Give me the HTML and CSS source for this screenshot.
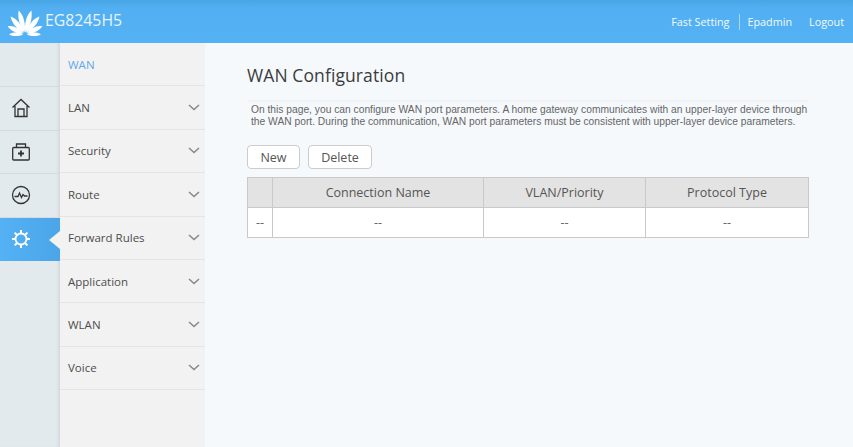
FILE: index.html
```html
<!DOCTYPE html>
<html lang="en">
<head>
<meta charset="utf-8">
<title>EG8245H5</title>
<link rel="stylesheet" href="styles.css">
</head>
<body>
<header class="topbar">
  <div class="brand">
    <svg class="logo" width="34" height="28" viewBox="0 0 34 28" fill="#fff">
      <defs><path id="petal" d="M0 0C-4-6-5.500-14-1.500-21C3.500-16 4-7 0 0Z"/><path id="petal2" d="M0 0C4-6 5.500-14 1.500-21C-3.500-16-4-7 0 0Z"/></defs>
      <use href="#petal" transform="translate(17 26.500) rotate(-12) translate(0 -2) scale(.78 1.090)"/>
      <use href="#petal2" transform="translate(17 26.500) rotate(12) translate(0 -2) scale(.78 1.090)"/>
      <use href="#petal" transform="translate(17 26.500) rotate(-36) translate(0 -2) scale(.78 1)"/>
      <use href="#petal2" transform="translate(17 26.500) rotate(36) translate(0 -2) scale(.78 1)"/>
      <use href="#petal" transform="translate(17 26.500) rotate(-61) translate(0 -2) scale(.74 .82)"/>
      <use href="#petal2" transform="translate(17 26.500) rotate(61) translate(0 -2) scale(.74 .82)"/>
      <use href="#petal" transform="translate(17 26.500) rotate(-87) translate(0 -2) scale(.55 .66)"/>
      <use href="#petal2" transform="translate(17 26.500) rotate(87) translate(0 -2) scale(.55 .66)"/>
    </svg>
    <span class="product">EG8245H5</span>
  </div>
  <nav class="toplinks">
    <a class="toplink divided">Fast Setting</a>
    <a class="toplink">Epadmin</a>
    <a class="toplink">Logout</a>
  </nav>
</header>
<div class="shell">
  <aside class="rail">
    <div class="rail-spacer"></div>
    <div class="rail-item">
      <svg width="20" height="20" viewBox="0 0 20 20" fill="none" stroke="#333" stroke-width="1.300"><path d="M1.500 9.500L10 1.500l8.500 8M4 8v10.500h12V8M7 18.500V11h6v7.500"/></svg>
    </div>
    <div class="rail-item">
      <svg width="20" height="20" viewBox="0 0 20 20" fill="none" stroke="#333" stroke-width="1.300"><rect x="1.700" y="5.500" width="16.600" height="12.500" rx="1"/><path d="M5.500 5.500V2h9v3.500"/><path d="M10 8.500v6M7 11.500h6" stroke-width="1.800"/></svg>
    </div>
    <div class="rail-item">
      <svg width="20" height="20" viewBox="0 0 20 20" fill="none" stroke="#333" stroke-width="1.300"><circle cx="10" cy="10" r="8.500"/><path d="M3.500 11.500H7l1.500-3.500 2 4.500 1.500-3 1.500 1.500h3"/></svg>
    </div>
    <div class="rail-item active">
      <svg width="20" height="20" viewBox="0 0 20 20" fill="none" stroke="#fff"><circle cx="10" cy="10" r="5.500" stroke-width="1.800"/><path d="M10 1v3M10 16v3M1 10h3M16 10h3M3.600 3.600l2.200 2.200M14.200 14.200l2.200 2.200M16.400 3.600l-2.200 2.200M5.800 14.200l-2.200 2.200" stroke-width="2"/></svg>
      <span class="notch"></span>
    </div>
  </aside>
  <nav class="menu">
    <div class="menu-item current">WAN</div>
    <div class="menu-item">LAN<svg class="chev" width="12" height="7" viewBox="0 0 12 7"><path d="M1 1l5 4.500L11 1" fill="none" stroke="#888" stroke-width="1.500"/></svg></div>
    <div class="menu-item">Security<svg class="chev" width="12" height="7" viewBox="0 0 12 7"><path d="M1 1l5 4.500L11 1" fill="none" stroke="#888" stroke-width="1.500"/></svg></div>
    <div class="menu-item">Route<svg class="chev" width="12" height="7" viewBox="0 0 12 7"><path d="M1 1l5 4.500L11 1" fill="none" stroke="#888" stroke-width="1.500"/></svg></div>
    <div class="menu-item">Forward Rules<svg class="chev" width="12" height="7" viewBox="0 0 12 7"><path d="M1 1l5 4.500L11 1" fill="none" stroke="#888" stroke-width="1.500"/></svg></div>
    <div class="menu-item">Application<svg class="chev" width="12" height="7" viewBox="0 0 12 7"><path d="M1 1l5 4.500L11 1" fill="none" stroke="#888" stroke-width="1.500"/></svg></div>
    <div class="menu-item">WLAN<svg class="chev" width="12" height="7" viewBox="0 0 12 7"><path d="M1 1l5 4.500L11 1" fill="none" stroke="#888" stroke-width="1.500"/></svg></div>
    <div class="menu-item">Voice<svg class="chev" width="12" height="7" viewBox="0 0 12 7"><path d="M1 1l5 4.500L11 1" fill="none" stroke="#888" stroke-width="1.500"/></svg></div>
  </nav>
  <main class="content">
    <h1 class="title">WAN Configuration</h1>
    <p class="intro">On this page, you can configure WAN port parameters. A home gateway communicates with an upper-layer device through the WAN port. During the communication, WAN port parameters must be consistent with upper-layer device parameters.</p>
    <div class="actions">
      <button class="btn btn-new">New</button>
      <button class="btn btn-del">Delete</button>
    </div>
    <div class="table">
      <div class="cell head"></div>
      <div class="cell head">Connection Name</div>
      <div class="cell head">VLAN/Priority</div>
      <div class="cell head">Protocol Type</div>
      <div class="cell">--</div>
      <div class="cell">--</div>
      <div class="cell">--</div>
      <div class="cell">--</div>
    </div>
  </main>
</div>
</body>
</html>
```
FILE: styles.css
```css
* { box-sizing: border-box; }
html, body { margin: 0; height: 100%; }
body {
  width: 853px;
  height: 447px;
  overflow: hidden;
  background: #f5f9fc;
  font-family: "Open Sans", "Liberation Sans", sans-serif;
  color: #444;
}
.topbar {
  height: 43px;
  display: flex;
  justify-content: space-between;
  align-items: center;
  background: linear-gradient(#48a5e6 0, #52b0f2 8px, #54b1f3 100%);
  color: #fff;
}
.brand { display: flex; align-items: center; padding-left: 8px; }
.logo { margin-right: 3px; overflow: visible; }
.product { font-size: 15.800px; color: #e6f4fe; margin-top: -3px; }
.toplinks { display: flex; align-items: center; padding-right: 9px; font-size: 10.800px; font-weight: 400; color: #f2faff; }
.toplink { display: block; margin-left: 17px; line-height: 16px; }
.toplink.divided { padding-right: 10px; margin-right: -10px; border-right: 1px solid #a9d8f8; }
.shell { display: flex; height: 404px; }
.rail {
  width: 60px;
  flex: none;
  background: #e3eaed;
  box-shadow: inset -3px 0 3px -1px #d3d9dc;
}
.rail-spacer { height: 44px; border-bottom: 1px solid #d5dbde; }
.rail-item {
  height: 43.500px;
  display: flex;
  align-items: center;
  justify-content: center;
  border-bottom: 1px solid #d5dbde;
  position: relative;
  padding-right: 18px;
}
.rail-item.active { background: linear-gradient(90deg, #54b1f3, #4aa6e8); border-bottom: 0; box-shadow: none; }
.notch {
  position: absolute;
  right: 0;
  top: 13px;
  width: 0;
  height: 0;
  border-top: 9px solid transparent;
  border-bottom: 9px solid transparent;
  border-right: 11px solid #f2f2f2;
}
.menu { width: 145px; flex: none; background: #f2f2f2; }
.menu-item {
  height: 43.400px;
  display: flex;
  align-items: center;
  justify-content: space-between;
  padding: 0 5px 0 8px;
  font-size: 11.500px;
  font-weight: 400;
  color: #4d4d4d;
  border-bottom: 1px solid #e4e4e4;
}
.menu-item.current { color: #63a9ea; }
.content { flex: 1; padding: 0 44px 0 42px; min-width: 0; }
.title { margin: 20px 0 0; font-size: 17.500px; line-height: 24px; font-weight: 400; color: #3c3c3c; letter-spacing: .1px; }
.intro {
  margin: 13px 0 0;
  padding: 4px 0 0 4px;
  font: 10.250px/12px "Liberation Sans", sans-serif;
  color: #666;
  background: linear-gradient(#eef2f5 0, #f5f9fc 3px);
}
.actions { display: flex; gap: 8px; margin-top: 17px; }
.btn {
  height: 24px;
  background: #fff;
  border: 1px solid #ccc;
  border-radius: 4px;
  font: 400 12.500px "Open Sans", sans-serif;
  color: #555;
  padding: 0;
}
.btn-new { width: 53px; }
.btn-del { width: 64px; }
.table {
  display: grid;
  grid-template-columns: 25px 211px 162px 163px;
  margin-top: 8px;
  width: 562px;
  border-top: 1px solid #c9c9c9;
  border-left: 1px solid #c9c9c9;
}
.cell {
  height: 30px;
  display: flex;
  align-items: center;
  justify-content: center;
  background: #fff;
  border-right: 1px solid #c9c9c9;
  border-bottom: 1px solid #c9c9c9;
  font-size: 12.500px;
  font-weight: 400;
  color: #666;
}
.cell.head { background: #e3e3e3; color: #555; }
```
